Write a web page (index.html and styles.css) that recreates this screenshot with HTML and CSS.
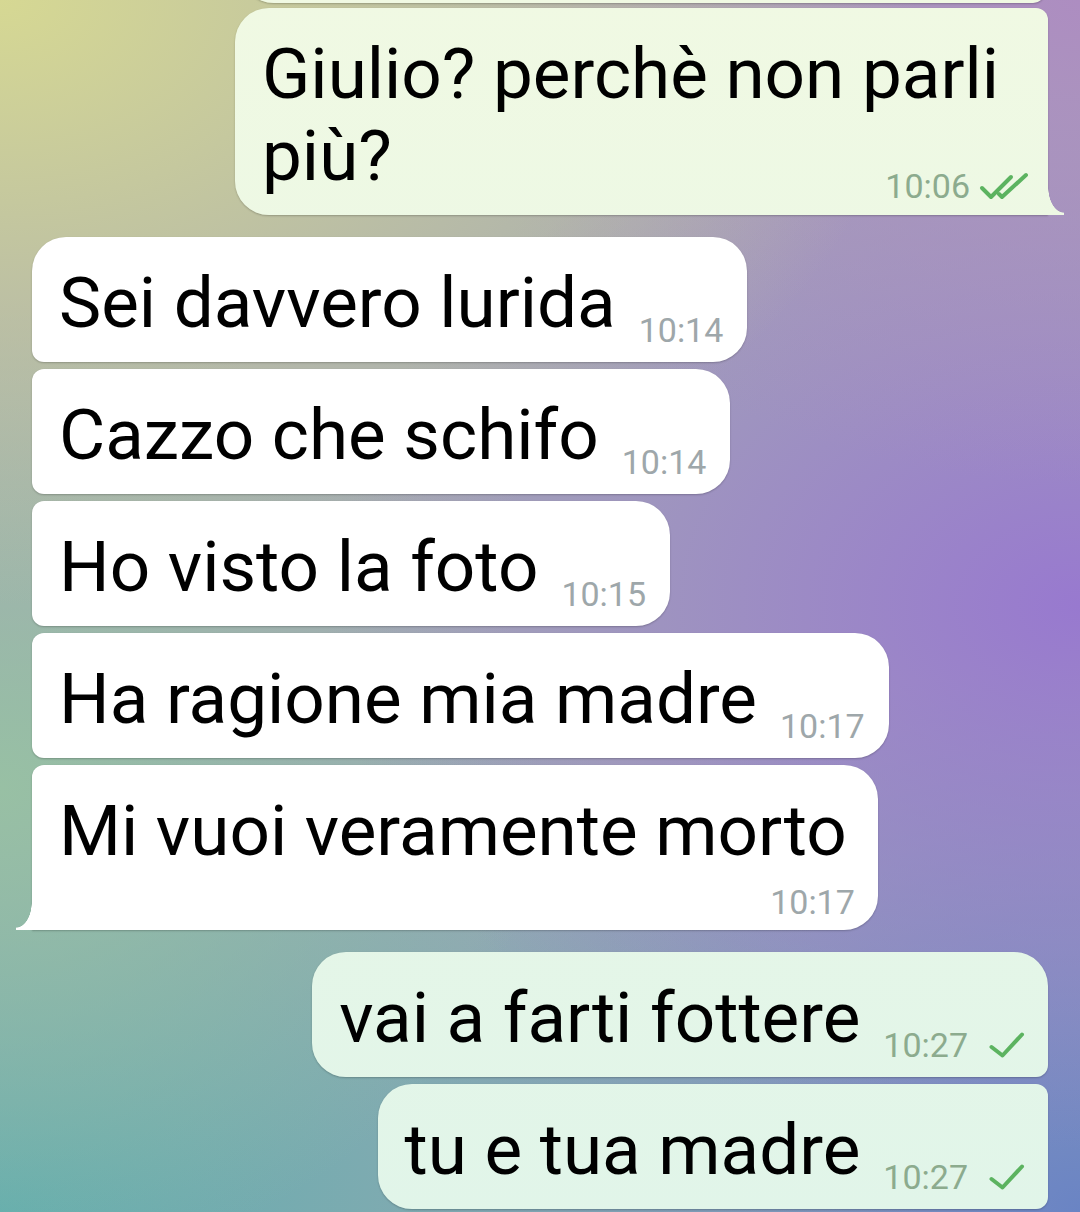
FILE: index.html
```html
<!DOCTYPE html>
<html lang="it">
<head>
  <meta charset="UTF-8" />
  <meta name="viewport" content="width=device-width, initial-scale=1.0"/>
  <title>Chat</title>
  <link rel="stylesheet" href="styles.css">
</head>
<body>
  <div class="chat">
    <div class="bubble out stub"></div>

    <div class="bubble out last">
      <span class="text">Giulio? perchè non parli più?</span><span class="meta"><span class="time">10:06</span><svg class="ticks double" width="50" height="28" viewBox="0 0 50 28"><path d="M3 16 L12 25 L32 5" /><path d="M20 22 L23 25 L47 3" /></svg></span>
    </div>

    <div class="bubble in first">
      <span class="text">Sei davvero lurida</span><span class="meta"><span class="time">10:14</span></span>
    </div>
    <div class="bubble in">
      <span class="text">Cazzo che schifo</span><span class="meta"><span class="time">10:14</span></span>
    </div>
    <div class="bubble in">
      <span class="text">Ho visto la foto</span><span class="meta"><span class="time">10:15</span></span>
    </div>
    <div class="bubble in">
      <span class="text">Ha ragione mia madre</span><span class="meta"><span class="time">10:17</span></span>
    </div>
    <div class="bubble in last below">
      <span class="text">Mi vuoi veramente morto</span><span class="meta"><span class="time">10:17</span></span>
    </div>

    <div class="bubble out first">
      <span class="text">vai a farti fottere</span><span class="meta"><span class="time">10:27</span><svg class="ticks" width="37" height="27" viewBox="0 0 37 27"><path d="M3.5 16 L14.5 24.5 L34 3.5" /></svg></span>
    </div>
    <div class="bubble out">
      <span class="text">tu e tua madre</span><span class="meta"><span class="time">10:27</span><svg class="ticks" width="37" height="27" viewBox="0 0 37 27"><path d="M3.5 16 L14.5 24.5 L34 3.5" /></svg></span>
    </div>
  </div>
</body>
</html>
```

FILE: styles.css
```css
* {
  box-sizing: border-box;
  margin: 0;
  padding: 0;
}

html,
body {
  height: 100%;
  overflow: hidden;
}

body {
  font-family: Roboto, "Noto Sans", sans-serif;
  background:
    radial-gradient(ellipse 85% 50% at 0% 0%, #d6d893, rgba(214, 216, 147, 0) 100%),
    radial-gradient(ellipse 60% 40% at 100% 0%, #ad8dc1, rgba(173, 141, 193, 0) 100%),
    radial-gradient(ellipse 70% 45% at 100% 50%, #9879cf, rgba(152, 121, 207, 0) 100%),
    radial-gradient(ellipse 50% 40% at 0% 65%, #98c0a4, rgba(152, 192, 164, 0) 100%),
    radial-gradient(ellipse 85% 50% at 0% 100%, #62adae, rgba(98, 173, 174, 0) 100%),
    radial-gradient(ellipse 65% 45% at 100% 100%, #6a84c4, rgba(106, 132, 196, 0) 100%),
    #a3a8b4;
}

.chat {
  display: flex;
  flex-direction: column;
  padding: 0 32px;
}

.bubble {
  position: relative;
  padding: 25px 24px 18px 27px;
  font-size: 71px;
  line-height: 82px;
  color: #000;
  box-shadow: 0 1px 2px rgba(0, 0, 0, 0.22);
  margin-top: 7px;
}

.bubble.first {
  margin-top: 22px;
}

/* incoming */
.in {
  align-self: flex-start;
  max-width: 860px;
  background: #fff;
  border-radius: 12px 34px 34px 12px;
}

.in.first {
  border-top-left-radius: 34px;
}

.in.last {
  border-bottom-left-radius: 0;
}

.in.last::after {
  content: "";
  position: absolute;
  left: -16px;
  bottom: 0;
  width: 16px;
  height: 28px;
  background: #fff;
  -webkit-mask-image: radial-gradient(16px 26px at 0 0, transparent 97%, #000 100%);
  mask-image: radial-gradient(16px 26px at 0 0, transparent 97%, #000 100%);
}

/* outgoing */
.out {
  align-self: flex-end;
  max-width: 813px;
  background: linear-gradient(#f0f9e3, #e1f5e9) fixed;
  border-radius: 34px 12px 12px 34px;
}

.out.first {
  border-top-right-radius: 34px;
}

.out.last {
  border-bottom-right-radius: 0;
}

.out.last::after {
  content: "";
  position: absolute;
  right: -16px;
  bottom: 0;
  width: 16px;
  height: 28px;
  background: linear-gradient(#f0f9e3, #e1f5e9) fixed;
  -webkit-mask-image: radial-gradient(16px 26px at 100% 0, transparent 97%, #000 100%);
  mask-image: radial-gradient(16px 26px at 100% 0, transparent 97%, #000 100%);
}

.stub {
  width: 805px;
  height: 100px;
  margin-top: -97px;
  margin-right: 3px;
}

.stub + .bubble {
  margin-top: 5px;
}

/* time + ticks */
.meta {
  float: right;
  margin: 54px 0 0 23px;
  font-size: 34px;
  line-height: 28px;
  white-space: nowrap;
}

.out.last .meta {
  margin-top: 57px;
}

.out.last {
  padding-bottom: 15px;
}

.in .time {
  color: #9ea7aa;
}

.out .time {
  color: #8cab8e;
}

.ticks {
  vertical-align: top;
  margin-left: 20px;
  margin-right: -1px;
  fill: none;
  stroke: #5cb360;
  stroke-width: 4;
  stroke-linecap: round;
  stroke-linejoin: round;
}

.ticks.double {
  margin-left: 9px;
  margin-right: -5px;
}

.below {
  padding-right: 31px;
}

.below .meta {
  float: none;
  display: block;
  text-align: right;
  margin: 16px -8px -4px 0;
}
```
